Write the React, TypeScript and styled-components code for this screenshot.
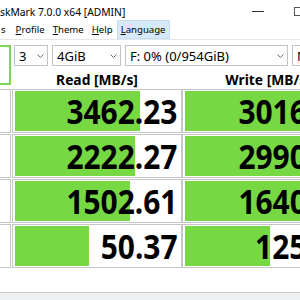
import React from 'react';
import styled, { createGlobalStyle } from 'styled-components';

const GlobalStyle = createGlobalStyle`
  html, body {
    margin: 0;
    padding: 0;
    background: #fff;
  }
`;

const meterGreen = '#76d944';
const cellBorder = '#c6c6c6';

const Viewport = styled.div`
  width: 300px;
  height: 300px;
  overflow: hidden;
  background: #fff;
`;

const Window = styled.div`
  width: 360px;
  height: 300px;
  display: flex;
  flex-direction: column;
  font-family: 'Noto Sans', 'Open Sans', sans-serif;
  color: #000;
`;

const TitleBar = styled.div`
  height: 20px;
  display: flex;
  align-items: center;
  flex-shrink: 0;
`;

const Title = styled.span`
  flex: 1;
  font-size: 10.3px;
  padding-top: 3px;
  white-space: nowrap;
`;

const CaptionButton = styled.div`
  width: 41px;
  height: 20px;
  padding-top: 2px;
  box-sizing: border-box;
  display: flex;
  align-items: center;
  justify-content: center;
`;

const MenuBar = styled.div`
  height: 19px;
  display: flex;
  flex-shrink: 0;
  border-bottom: 1px solid #e6e6e6;
  font-size: 9.6px;
`;

const MenuItem = styled.div<{ $active?: boolean; $cut?: boolean }>`
  display: flex;
  align-items: center;
  padding: ${({ $cut }) => ($cut ? '0 5px 0 0' : '0 3px')};
  border: 1px solid ${({ $active }) => ($active ? '#c2dff6' : 'transparent')};
  background: ${({ $active }) => ($active ? '#d7e9f8' : 'transparent')};
  white-space: nowrap;

  u {
    text-decoration-thickness: 1px;
    text-underline-offset: 1px;
  }
`;

const Board = styled.div`
  margin-top: 5px;
  display: grid;
  grid-template-columns: 12px 170px 172px;
  grid-template-rows: 21px 23px repeat(4, 45px);
`;

const AllButton = styled.div`
  grid-row: 1 / span 2;
  width: 40px;
  height: 40px;
  margin-left: -29px;
  box-sizing: border-box;
  border: 2px solid #7cd850;
  background: #fff;
`;

const Controls = styled.div`
  grid-column: 2 / span 2;
  display: flex;
  gap: 4px;
  padding-left: 2px;
`;

const Combo = styled.div<{ $width: number }>`
  width: ${({ $width }) => $width}px;
  height: 21px;
  flex-shrink: 0;
  box-sizing: border-box;
  border: 1px solid #c4c4c4;
  background: #fff;
  display: flex;
  align-items: center;
  justify-content: space-between;
  padding: 0 3px 0 4px;
  font-size: 13px;
  white-space: nowrap;
`;

const HeaderCell = styled.div`
  display: flex;
  justify-content: center;
  align-items: flex-end;
  padding-bottom: 2px;
  font-size: 13.8px;
  font-weight: 700;
  line-height: 14px;
  white-space: nowrap;
`;

const LabelCell = styled.div`
  width: 40px;
  height: 44px;
  margin-left: -29px;
  box-sizing: border-box;
  border: 1px solid ${cellBorder};
  background: #fff;
`;

const ResultCell = styled.div`
  height: 44px;
  box-sizing: border-box;
  border: 1px solid ${cellBorder};
  padding: 1px 2px;
  background: #fff;
  display: grid;
`;

const Meter = styled.div`
  grid-area: 1 / 1;
  background: ${meterGreen};
`;

const Value = styled.div`
  grid-area: 1 / 1;
  justify-self: end;
  align-self: center;
  padding-right: 2px;
  font-size: 34px;
  font-weight: 700;
  line-height: 34px;
  white-space: nowrap;
  transform: scaleX(0.88);
  transform-origin: right center;
`;

const Comment = styled.div`
  margin-top: 23px;
  flex: 1;
  border-top: 1px solid #c8c8c8;
  background: #eef0f2;
`;

const Chevron = () => (
  <svg width="7" height="4" viewBox="0 0 7 4">
    <path d="M0.5 0.5 L3.5 3.5 L6.5 0.5" fill="none" stroke="#6a6a6a" strokeWidth="1" />
  </svg>
);

const rows = [
  { label: 'SEQ1M Q8T1', read: 3462.23, write: 3016.45, readBar: 0.76, writeBar: 0.92 },
  { label: 'SEQ1M Q1T1', read: 2222.27, write: 2990.18, readBar: 0.73, writeBar: 0.91 },
  { label: 'RND4K Q32T16', read: 1502.61, write: 1640.52, readBar: 0.7, writeBar: 0.84 },
  { label: 'RND4K Q1T1', read: 50.37, write: 125.74, readBar: 0.45, writeBar: 0.51 },
];

const combos = [
  { text: '3', width: 34 },
  { text: '4GiB', width: 69 },
  { text: 'F: 0% (0/954GiB)', width: 163 },
  { text: 'MB/s', width: 60 },
];

const App = () => {
  return (
    <Viewport>
      <GlobalStyle />
      <Window>
        <TitleBar>
          <Title>skMark 7.0.0 x64 [ADMIN]</Title>
          <CaptionButton>
            <svg width="12" height="1" viewBox="0 0 12 1">
              <rect width="12" height="1" fill="#333" />
            </svg>
          </CaptionButton>
          <CaptionButton>
            <svg width="9" height="9" viewBox="0 0 9 9">
              <rect x="0.5" y="0.5" width="8" height="8" fill="none" stroke="#555" />
            </svg>
          </CaptionButton>
          <CaptionButton />
        </TitleBar>
        <MenuBar>
          <MenuItem $cut>s</MenuItem>
          <MenuItem>
            <span>
              <u>P</u>rofile
            </span>
          </MenuItem>
          <MenuItem>
            <span>
              <u>T</u>heme
            </span>
          </MenuItem>
          <MenuItem>
            <span>
              <u>H</u>elp
            </span>
          </MenuItem>
          <MenuItem $active>
            <span>
              <u>L</u>anguage
            </span>
          </MenuItem>
        </MenuBar>
        <Board>
          <AllButton />
          <Controls>
            {combos.map((c) => (
              <Combo key={c.text} $width={c.width}>
                <span>{c.text}</span>
                <Chevron />
              </Combo>
            ))}
          </Controls>
          <HeaderCell>Read [MB/s]</HeaderCell>
          <HeaderCell>Write [MB/s]</HeaderCell>
          {rows.map((r) => (
            <React.Fragment key={r.label}>
              <LabelCell />
              <ResultCell>
                <Meter style={{ width: `${r.readBar * 100}%` }} />
                <Value>{r.read.toFixed(2)}</Value>
              </ResultCell>
              <ResultCell>
                <Meter style={{ width: `${r.writeBar * 100}%` }} />
                <Value>{r.write.toFixed(2)}</Value>
              </ResultCell>
            </React.Fragment>
          ))}
        </Board>
        <Comment />
      </Window>
    </Viewport>
  );
};

export default App;
